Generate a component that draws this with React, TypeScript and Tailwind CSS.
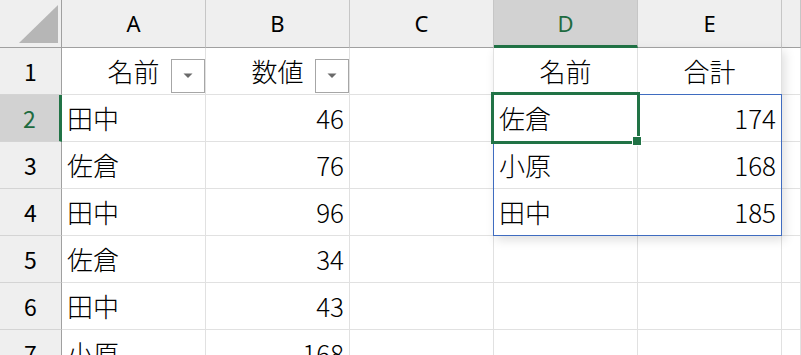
import React from "react";

const CJK = "font-['Noto_Sans_CJK_JP',sans-serif]";

type Cell = { t?: string; right?: boolean; center?: boolean; dd?: boolean };

const rows: { n: string; cells: Cell[] }[] = [
  {
    n: "1",
    cells: [
      { t: "名前", center: true, dd: true },
      { t: "数値", center: true, dd: true },
      {},
      { t: "名前", center: true },
      { t: "合計", center: true },
      {},
    ],
  },
  { n: "2", cells: [{ t: "田中" }, { t: "46", right: true }, {}, { t: "佐倉" }, { t: "174", right: true }, {}] },
  { n: "3", cells: [{ t: "佐倉" }, { t: "76", right: true }, {}, { t: "小原" }, { t: "168", right: true }, {}] },
  { n: "4", cells: [{ t: "田中" }, { t: "96", right: true }, {}, { t: "田中" }, { t: "185", right: true }, {}] },
  { n: "5", cells: [{ t: "佐倉" }, { t: "34", right: true }, {}, {}, {}, {}] },
  { n: "6", cells: [{ t: "田中" }, { t: "43", right: true }, {}, {}, {}, {}] },
  { n: "7", cells: [{ t: "小原" }, { t: "168", right: true }, {}, {}, {}, {}] },
];

const cols = ["A", "B", "C", "D", "E", ""];

function Dropdown() {
  return (
    <div className="absolute right-0 bottom-[1px] w-[34px] h-[34px] border border-[#a6a6a6] bg-white flex items-center justify-center">
      <svg width="10" height="6" viewBox="0 0 10 6">
        <path d="M0.5 0.5 L9.5 0.5 L5 5 Z" fill="#6a6a6a" />
      </svg>
    </div>
  );
}

export default function App() {
  return (
    <div className="w-[801px] h-[355px] overflow-hidden bg-white relative">
      <div className="grid grid-cols-[62px_144px_144px_144px_144px_144px_1fr] grid-rows-[48px_repeat(7,47px)]">
        {/* corner */}
        <div className="bg-[#efefef] border-r border-b border-[#a0a0a0] relative">
          <svg className="absolute left-0 top-0" width="61" height="47" viewBox="0 0 61 47">
            <path d="M19 43 L58 43 L58 5 Z" fill="#b6b6b6" />
          </svg>
        </div>
        {cols.map((c, i) => {
          const sel = c === "D";
          return (
            <div
              key={"h" + i}
              className={
                sel
                  ? "bg-[#d2d2d2] border-r border-r-[#c6c6c6] border-b-[3px] border-b-[#217346] flex items-center justify-center text-[#1e6b40] text-[22px] font-['Noto_Sans',sans-serif] pt-[2px]"
                  : "bg-[#efefef] border-r border-r-[#c6c6c6] border-b border-b-[#a0a0a0] flex items-center justify-center text-black text-[22px] font-['Noto_Sans',sans-serif]"
              }
            >
              {c}
            </div>
          );
        })}
        {rows.map((r) => (
          <React.Fragment key={r.n}>
            <div
              className={
                r.n === "2"
                  ? `bg-[#d2d2d2] border-r-[3px] border-r-[#217346] border-b border-b-[#d4d4d4] flex items-center justify-center text-[#1e6b40] text-[23px] ${CJK}`
                  : `bg-[#efefef] border-r border-r-[#a0a0a0] border-b border-b-[#d4d4d4] flex items-center justify-center text-black text-[23px] ${CJK}`
              }
            >
              {r.n}
            </div>
            {r.cells.map((c, i) => (
              <div
                key={i}
                className={`relative border-r border-b border-[#e1e1e1] flex items-center px-[5px] text-[26px] font-light text-black ${CJK} ${
                  c.right ? "justify-end" : c.center ? "justify-center" : "justify-start"
                }`}
              >
                <span className="leading-none">{c.t}</span>
                {c.dd && <Dropdown />}
              </div>
            ))}
          </React.Fragment>
        ))}
      </div>
      {/* shadow of table */}
      <div className="absolute left-[493px] top-[47px] w-[289px] h-[189px] shadow-[3px_4px_10px_rgba(0,0,0,0.13)] pointer-events-none" />
      {/* blue range */}
      <div className="absolute left-[493px] top-[94px] w-[289px] h-[142px] border border-[#3f6cc0] pointer-events-none" />
      {/* active cell */}
      <div className="absolute left-[491px] top-[92px] w-[149px] h-[52px] border-[3px] border-[#217346] pointer-events-none" />
      {/* fill handle */}
      <div className="absolute left-[632px] top-[136px] w-[10px] h-[10px] bg-[#217346] border border-white pointer-events-none" />
    </div>
  );
}
